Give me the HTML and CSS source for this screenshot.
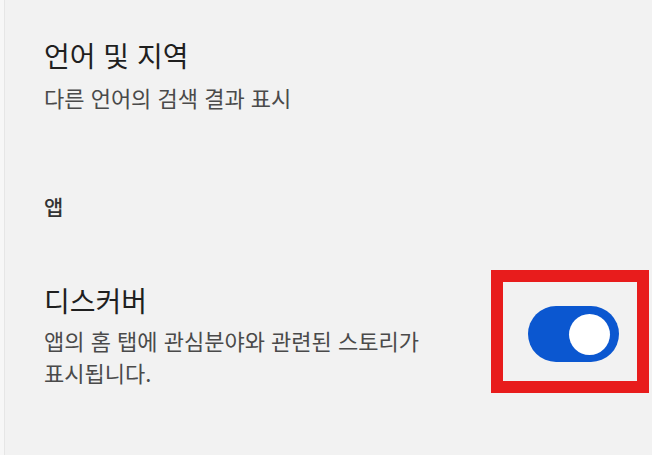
FILE: index.html
```html
<!DOCTYPE html>
<html lang="ko">
<head>
<meta charset="utf-8">
<link rel="stylesheet" href="styles.css">
</head>
<body>
<div class="page">
  <div class="edge"></div>
  <main class="content">
    <section class="setting">
      <h2 class="title">언어 및 지역</h2>
      <p class="desc">다른 언어의 검색 결과 표시</p>
    </section>
    <h3 class="category">앱</h3>
    <section class="setting-row">
      <div class="row-text">
        <h2 class="title">디스커버</h2>
        <p class="desc multi">앱의 홈 탭에 관심분야와 관련된 스토리가 표시됩니다.</p>
      </div>
      <div class="highlight">
        <div class="toggle" role="switch" aria-checked="true">
          <span class="knob"></span>
        </div>
      </div>
    </section>
  </main>
</div>
</body>
</html>
```

FILE: styles.css
```css
html, body {
  margin: 0;
  padding: 0;
  background: #f2f2f2;
}
body {
  font-family: "Noto Sans CJK KR", "Noto Sans", sans-serif;
  width: 652px;
  height: 455px;
  overflow: hidden;
}
.page {
  display: flex;
  height: 455px;
}
.edge {
  width: 4px;
  flex: none;
  background: #f7f7f7;
  border-right: 1px solid #e6e6e6;
}
.content {
  flex: 1;
  padding: 37px 0 0 39px;
}
.setting {
  display: flex;
  flex-direction: column;
}
.title {
  margin: 0;
  font-size: 28px;
  line-height: 36px;
  font-weight: 400;
  color: #1f1f1f;
}
.desc {
  margin: 9px 0 0;
  font-size: 22px;
  line-height: 30px;
  color: #4a4a4a;
  word-break: keep-all;
}
.desc.multi {
  margin-top: 6px;
  line-height: 32px;
}
.category {
  margin: 80px 0 0;
  font-size: 21px;
  line-height: 28px;
  font-weight: 500;
  color: #333333;
}
.setting-row {
  display: flex;
  justify-content: space-between;
  align-items: flex-start;
  margin-top: 50px;
  margin-right: 3px;
}
.row-text {
  width: 420px;
  padding-top: 12px;
}
.highlight {
  width: 158px;
  height: 123px;
  box-sizing: border-box;
  border: 12px solid #e81c1c;
  padding: 24px 0 0 25px;
}
.toggle {
  width: 91px;
  height: 56px;
  border-radius: 28px;
  background: #0b57d0;
  display: flex;
  align-items: center;
  justify-content: flex-end;
  padding: 0 9px;
  box-sizing: border-box;
}
.knob {
  width: 41px;
  height: 41px;
  border-radius: 50%;
  background: #ffffff;
}
```
